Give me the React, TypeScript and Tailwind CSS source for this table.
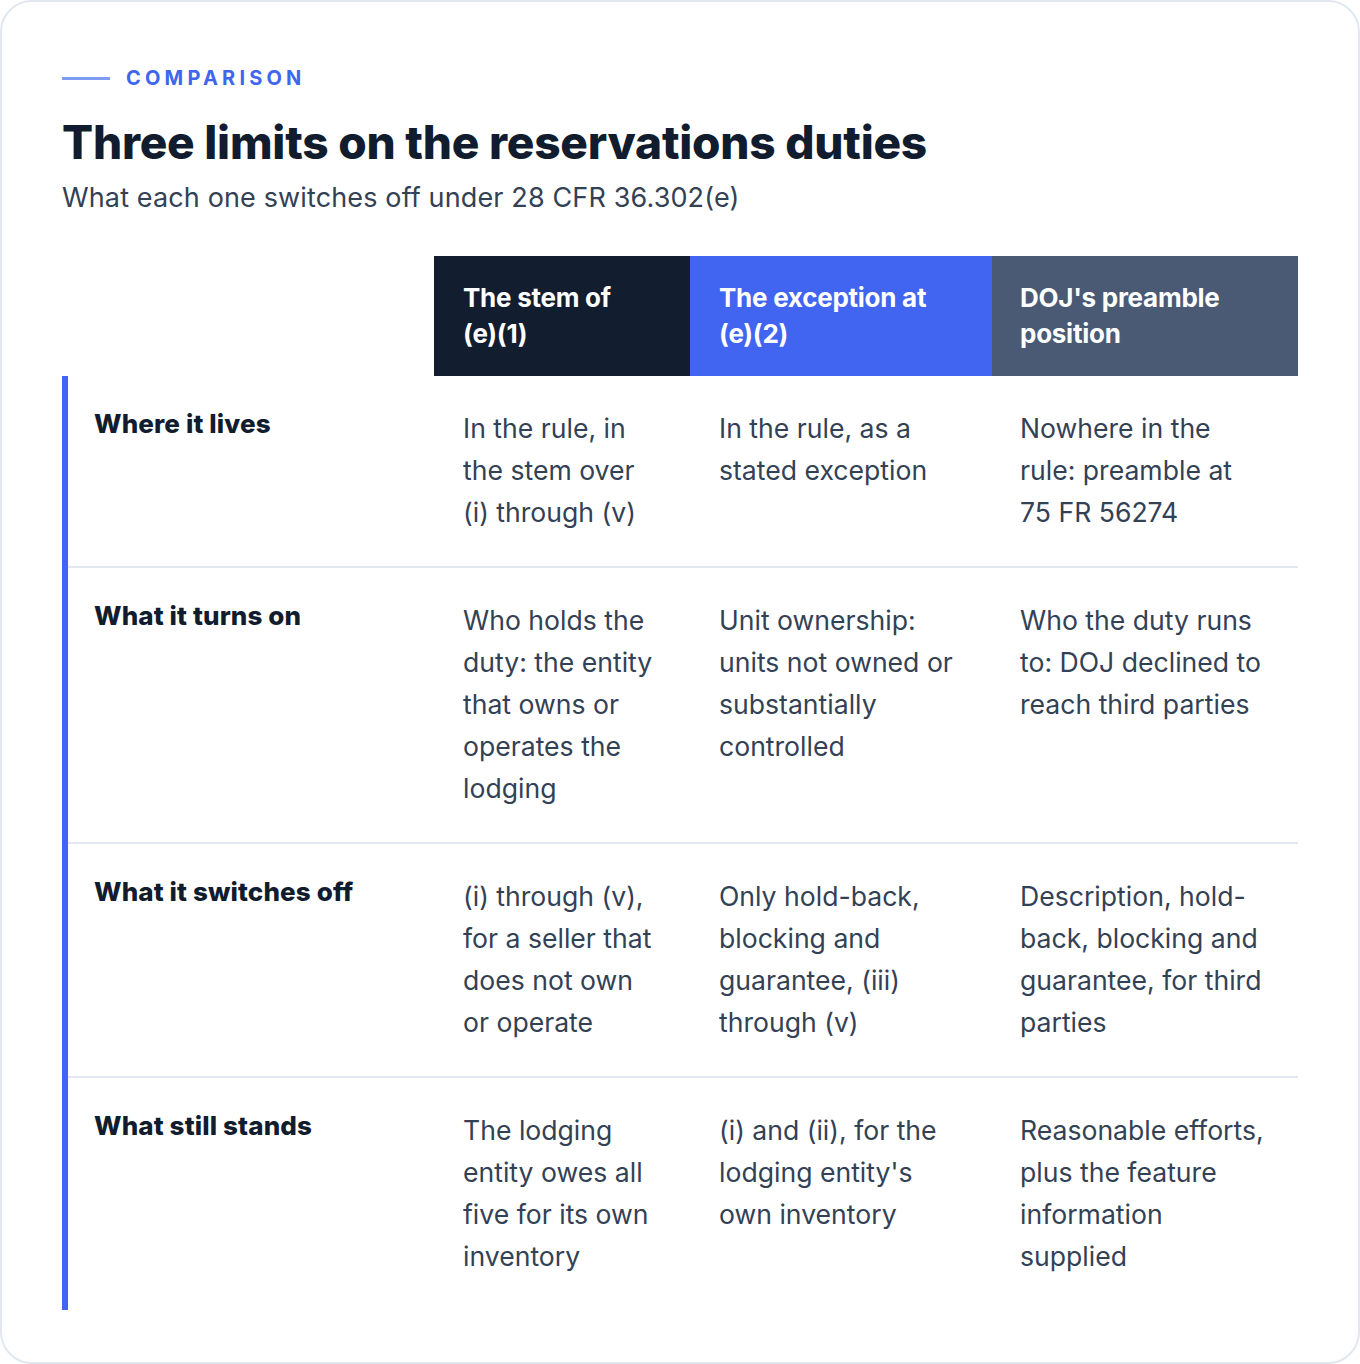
const rows = [
  {
    label: "Where it lives",
    cells: [
      "In the rule, in the stem over (i) through (v)",
      "In the rule, as a stated exception",
      "Nowhere in the rule: preamble at 75 FR 56274",
    ],
  },
  {
    label: "What it turns on",
    cells: [
      "Who holds the duty: the entity that owns or operates the lodging",
      "Unit ownership: units not owned or substantially controlled",
      "Who the duty runs to: DOJ declined to reach third parties",
    ],
  },
  {
    label: "What it switches off",
    cells: [
      "(i) through (v), for a seller that does not own or operate",
      "Only hold-back, blocking and guarantee, (iii) through (v)",
      "Description, hold-back, blocking and guarantee, for third parties",
    ],
  },
  {
    label: "What still stands",
    cells: [
      "The lodging entity owes all five for its own inventory",
      "(i) and (ii), for the lodging entity's own inventory",
      "Reasonable efforts, plus the feature information supplied",
    ],
  },
];

const heads = [
  { text: "The stem of", tail: "(e)(1)", bg: "bg-[#121d2f]" },
  { text: "The exception at", tail: "(e)(2)", bg: "bg-[#4165f0]" },
  { text: "DOJ's preamble", tail: "position", bg: "bg-[#4a5a75]" },
];

const cellPad = ["pl-[29px] pr-[29px]", "pl-[29px] pr-[29px]", "pl-[28px] pr-[30px]"];

export default function App() {
  return (
    <div className="min-h-screen bg-white font-['Inter',sans-serif]">
      <div className="h-[1364px] w-[1360px] rounded-[32px] border-2 border-[#e2e8f0] bg-white px-[60px] pt-[64px]">
        <div className="flex items-center gap-4">
          <span className="h-[3px] w-12 bg-[#7f9cf5]" />
          <span className="text-[20px] font-bold leading-6 tracking-[0.21em] text-[#4066ee]">
            COMPARISON
          </span>
        </div>
        <h1 className="mt-[26px] text-[46px] font-extrabold leading-[52px] tracking-[-0.005em] text-[#111c2e]">
          Three limits on the reservations duties
        </h1>
        <p className="mt-3 text-[27px] leading-9 tracking-[0.005em] text-[#334155]">
          What each one switches off under 28 CFR 36.302(e)
        </p>

        <div className="mt-10 grid grid-cols-[372px_256px_302px_306px]">
          <div />
          {heads.map((h, j) => (
            <div
              key={h.text}
              className={`${h.bg} ${cellPad[j]} py-6 text-[26px] font-bold leading-9 tracking-[-0.01em] text-white`}
            >
              {h.text} <span className="whitespace-nowrap">{h.tail}</span>
            </div>
          ))}
        </div>

        <div className="border-l-[6px] border-[#4165f0]">
          {rows.map((row, i) => (
            <div
              key={row.label}
              className={`grid grid-cols-[366px_256px_302px_306px] ${i < rows.length - 1 ? "border-b-2 border-[#e2e8f0]" : ""}`}
            >
              <div className="pl-[26px] pt-8 text-[26px] font-extrabold leading-8 tracking-[0.005em] text-[#111c2e]">
                {row.label}
              </div>
              {row.cells.map((c, j) => (
                <div
                  key={j}
                  className={`${cellPad[j]} pb-[33px] pt-[31px] text-[26.6px] leading-[42px] text-[#334155]`}
                >
                  {c}
                </div>
              ))}
            </div>
          ))}
        </div>
      </div>
    </div>
  );
}
